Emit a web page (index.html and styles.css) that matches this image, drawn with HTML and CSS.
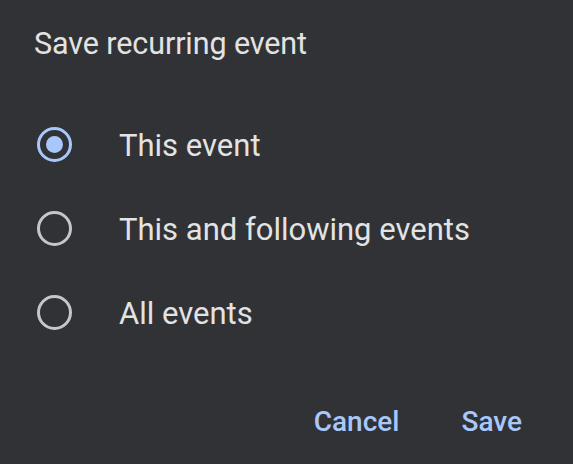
FILE: index.html
```html
<!DOCTYPE html>
<html>
<head>
<meta charset="utf-8">
<link rel="stylesheet" href="styles.css">
</head>
<body>
<div class="dialog">
  <h1 class="title">Save recurring event</h1>
  <div class="options">
    <label class="option">
      <span class="radio checked"><span class="dot"></span></span>
      <span class="label">This event</span>
    </label>
    <label class="option">
      <span class="radio"></span>
      <span class="label">This and following events</span>
    </label>
    <label class="option">
      <span class="radio"></span>
      <span class="label">All events</span>
    </label>
  </div>
  <div class="actions">
    <button class="btn">Cancel</button>
    <button class="btn">Save</button>
  </div>
</div>
</body>
</html>
```
FILE: styles.css
```css
html, body {
  margin: 0;
  padding: 0;
  background: #313236;
  width: 573px;
  height: 464px;
  overflow: hidden;
}
.dialog {
  font-family: Roboto, "Noto Sans", sans-serif;
  color: #e3e3e3;
  padding: 26px 0 0 34px;
}
.title {
  margin: 0;
  font-size: 30.5px;
  font-weight: 400;
  line-height: 36px;
  letter-spacing: -0.1px;
}
.options {
  margin-top: 42px;
  display: flex;
  flex-direction: column;
}
.option {
  display: flex;
  align-items: center;
  height: 84px;
}
.radio {
  box-sizing: border-box;
  width: 35px;
  height: 35px;
  border: 3.4px solid #c4c6c9;
  border-radius: 50%;
  display: flex;
  align-items: center;
  justify-content: center;
  margin-left: 3px;
  margin-bottom: 4px;
  flex: none;
}
.radio.checked {
  border-color: #a8c7fa;
}
.dot {
  width: 17px;
  height: 17px;
  border-radius: 50%;
  background: #a8c7fa;
}
.label {
  margin-left: 47px;
  font-size: 31px;
  line-height: 36px;
}
.actions {
  display: flex;
  justify-content: flex-end;
  gap: 62px;
  padding-right: 51px;
  margin-top: 49px;
}
.btn {
  background: none;
  border: none;
  padding: 0;
  font-family: Roboto, sans-serif;
  font-size: 28px;
  font-weight: 500;
  color: #a8c7fa;
  line-height: 34px;
}
```
